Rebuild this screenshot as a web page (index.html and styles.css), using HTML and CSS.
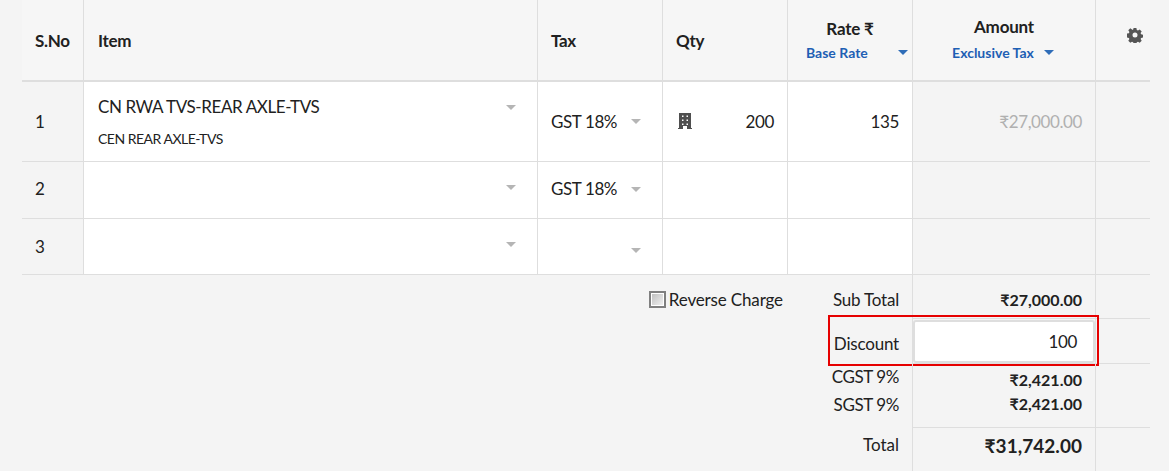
FILE: index.html
```html
<!DOCTYPE html>
<html lang="en">
<head>
<meta charset="utf-8">
<title>Line items</title>
<link rel="stylesheet" href="styles.css">
</head>
<body>
<div class="sheet">
  <div class="row head">
    <div class="cell c-no"><b>S.No</b></div>
    <div class="cell c-item"><b>Item</b></div>
    <div class="cell c-tax"><b>Tax</b></div>
    <div class="cell c-qty"><b>Qty</b></div>
    <div class="cell c-rate">
      <b class="h-main">Rate ₹</b>
      <div class="h-sub rate-sub"><span>Base Rate</span><i class="caret blue"></i></div>
    </div>
    <div class="cell c-amt">
      <b class="h-main amt-main">Amount</b>
      <div class="h-sub amt-sub"><span>Exclusive Tax</span><i class="caret blue"></i></div>
    </div>
    <div class="cell c-act">
      <svg class="gear" viewBox="0 0 16 16" width="16" height="16"><path fill="#555" fill-rule="evenodd" d="M6.600 1h2.800l.4 2 1.200.5 1.700-1.100 2 2-1.100 1.700.5 1.200 2 .4v2.800l-2 .4-.5 1.200 1.100 1.700-2 2-1.700-1.100-1.200.5-.4 2H6.600l-.4-2-1.200-.5-1.700 1.100-2-2 1.100-1.700-.5-1.200-2-.4V6.600l2-.4.5-1.200-1.100-1.700 2-2 1.700 1.100L6 2.900zM8 5.500a2.500 2.500 0 1 0 0 5 2.500 2.500 0 0 0 0-5z"/></svg>
    </div>
  </div>

  <div class="row r1">
    <div class="cell c-no">1</div>
    <div class="cell c-item white item-main">
      <div class="item-name">CN RWA TVS-REAR AXLE-TVS</div>
      <div class="item-desc">CEN REAR AXLE-TVS</div>
      <i class="caret grey item-caret"></i>
    </div>
    <div class="cell c-tax white"><span>GST 18%</span><i class="caret grey tax-caret"></i></div>
    <div class="cell c-qty white qty">
      <svg class="bldg" viewBox="0 0 14 16" width="14" height="16"><path fill="#4f4f4f" fill-rule="evenodd" d="M1 0h12v15h1v1H9v-3H5v3H0v-1h1zM4 2.500V4h1.500V2.500zm4.500 0V4H10V2.500zM4 6.500V8h1.500V6.500zm4.500 0V8H10V6.500zM4 10.500V12h1.500v-1.500zm4.500 0V12H10v-1.500z"/></svg>
      <span>200</span>
    </div>
    <div class="cell c-rate white num">135</div>
    <div class="cell c-amt num muted">₹27,000.00</div>
    <div class="cell c-act"></div>
  </div>

  <div class="row r2">
    <div class="cell c-no">2</div>
    <div class="cell c-item white"><i class="caret grey item-caret2"></i></div>
    <div class="cell c-tax white"><span>GST 18%</span><i class="caret grey tax-caret"></i></div>
    <div class="cell c-qty white"></div>
    <div class="cell c-rate white"></div>
    <div class="cell c-amt"></div>
    <div class="cell c-act"></div>
  </div>

  <div class="row r3">
    <div class="cell c-no">3</div>
    <div class="cell c-item white"><i class="caret grey item-caret2"></i></div>
    <div class="cell c-tax white tax-empty"><i class="caret grey"></i></div>
    <div class="cell c-qty white"></div>
    <div class="cell c-rate white"></div>
    <div class="cell c-amt"></div>
    <div class="cell c-act"></div>
  </div>

  <div class="sum s-sub">
    <div class="lab">
      <label class="rc"><span class="box"></span>Reverse Charge</label>
      <span>Sub Total</span>
    </div>
    <div class="val"><b>₹27,000.00</b></div>
    <div class="end"></div>
  </div>
  <div class="sum s-disc">
    <div class="lab"><span>Discount</span></div>
    <div class="val inp"><div class="field">100</div></div>
    <div class="end"></div>
    <div class="mark"></div>
  </div>
  <div class="sum s-tax">
    <div class="lab stack"><span>CGST 9%</span><span>SGST 9%</span></div>
    <div class="val stack"><b>₹2,421.00</b><b>₹2,421.00</b></div>
    <div class="end"></div>
  </div>
  <div class="sum s-total">
    <div class="lab"><span>Total</span></div>
    <div class="val"><b class="grand">₹31,742.00</b></div>
    <div class="end"></div>
  </div>
</div>
</body>
</html>
```
FILE: styles.css
```css
* { box-sizing: border-box; }
html, body { margin: 0; height: 471px; overflow: hidden; }
body {
  background: #f4f4f4;
  color: #212121;
  font-family: Lato, "Noto Sans", sans-serif;
  font-size: 17px;
  letter-spacing: -0.4px;
}
.sheet { width: 1128px; margin-left: 22px; }
.row {
  display: grid;
  grid-template-columns: 62px 454px 125px 125px 125px 183px 54px;
  border-bottom: 1px solid #dedede;
}
.head { height: 82px; background: #f6f6f6; border-bottom-width: 2px; letter-spacing: -0.3px; }
.r1 { height: 80px; }
.r2 { height: 57px; }
.r3 { height: 56px; }
.cell {
  border-right: 1px solid #dedede;
  padding: 0 13px;
  display: flex;
  align-items: center;
  position: relative;
}
.c-act { border-right: 0; }
.white { background: #fff; }
.c-item { padding-left: 14px; }
.r1 .cell, .r3 .c-no { padding-bottom: 1px; }
.r2 .c-no, .r2 .c-tax { padding-bottom: 3px; }
.head b { font-weight: 700; }
.head .c-rate, .head .c-amt {
  flex-direction: column;
  align-items: center;
  justify-content: flex-start;
  padding: 0;
}
.h-main { display: block; letter-spacing: -0.2px; }
.head .c-rate .h-main { margin-top: 18px; }
.head .c-amt .h-main { margin-top: 16px; }
.h-sub {
  color: #1e5fb4;
  font-size: 14px;
  letter-spacing: 0;
  font-weight: 700;
  display: flex;
  align-items: center;
  margin-top: 5px;
}
.rate-sub { width: 100%; padding-left: 18px; justify-content: space-between; padding-right: 4px; }
.amt-sub { gap: 10px; margin-top: 7px; margin-left: -2px; }
.caret {
  display: inline-block;
  width: 0;
  height: 0;
  border-left: 5px solid transparent;
  border-right: 5px solid transparent;
  border-top: 5px solid #b5b5b5;
}
.caret.blue { border-top-color: #2f6db8; }
.c-act { justify-content: flex-start; align-items: flex-start; padding: 0 0 0 31px; }
.gear { margin-top: 27px; }
.item-main { flex-direction: column; align-items: flex-start; justify-content: flex-start; }
.item-name { margin-top: 15px; line-height: 20px; }
.item-desc { margin-top: 13px; font-size: 14px; letter-spacing: -0.5px; line-height: 18px; }
.item-caret { position: absolute; right: 21px; top: 23px; }
.item-caret2 { position: absolute; right: 21px; top: 23px; }
.tax-caret { margin-left: 14px; margin-top: 1px; }
.tax-empty { justify-content: flex-end; padding-right: 21px; }
.tax-empty .caret { margin-top: 8px; }
.qty { justify-content: space-between; }
.bldg { margin-left: 2px; }
.num { justify-content: flex-end; }
.muted { color: #b0b0b0; }

.sum {
  display: grid;
  grid-template-columns: 890px 184px 54px;
  position: relative;
}
.lab {
  display: flex;
  justify-content: flex-end;
  align-items: center;
  padding-right: 13px;
  letter-spacing: -0.2px;
}
.val {
  border-left: 1px solid #dedede;
  border-right: 1px solid #dedede;
  border-bottom: 1px solid #dedede;
  padding-right: 13px;
  display: flex;
  justify-content: flex-end;
  align-items: center;
}
.end { border-bottom: 1px solid #dedede; }
.val b { font-weight: 700; font-size: 16px; letter-spacing: 0; }
.s-sub { height: 44px; }
.s-sub .lab { padding-top: 4px; }
.s-sub .val { padding-top: 5px; }
.rc { display: flex; align-items: center; margin-right: 50px; letter-spacing: -0.15px; }
.box {
  width: 17px;
  height: 17px;
  margin-right: 3px;
  border: 2px solid #808080;
  background: linear-gradient(135deg, #bdbdbd, #f4f4f4);
  box-shadow: inset 0 0 0 1px #fff;
}
.s-disc { height: 45px; }
.s-disc .lab span { margin-top: 3px; }
.inp { padding: 1px 0 0 0; align-items: stretch; }
.field {
  flex: 1;
  background: #fff;
  border: 2px solid #dedede;
  border-radius: 3px;
  text-align: right;
  padding: 9px 16px 0 0;
}
.mark {
  position: absolute;
  left: 806px;
  top: -4px;
  width: 271px;
  height: 51px;
  border: 2px solid #e60000;
}
.s-tax { height: 64px; }
.stack { flex-direction: column; align-items: flex-end; justify-content: flex-start; }
.lab.stack { margin-top: -1px; gap: 1px; }
.lab.stack span { line-height: 27px; letter-spacing: -0.4px; }
.val.stack { padding-top: 4px; }
.val.stack b { line-height: 24px; }
.s-total { height: 44px; }
.s-total .val, .s-total .end { border-bottom: 0; }
.s-total .lab { padding-bottom: 11px; letter-spacing: 0; }
.val b.grand { font-size: 19px; letter-spacing: 0.03px; padding-bottom: 10px; }
```
